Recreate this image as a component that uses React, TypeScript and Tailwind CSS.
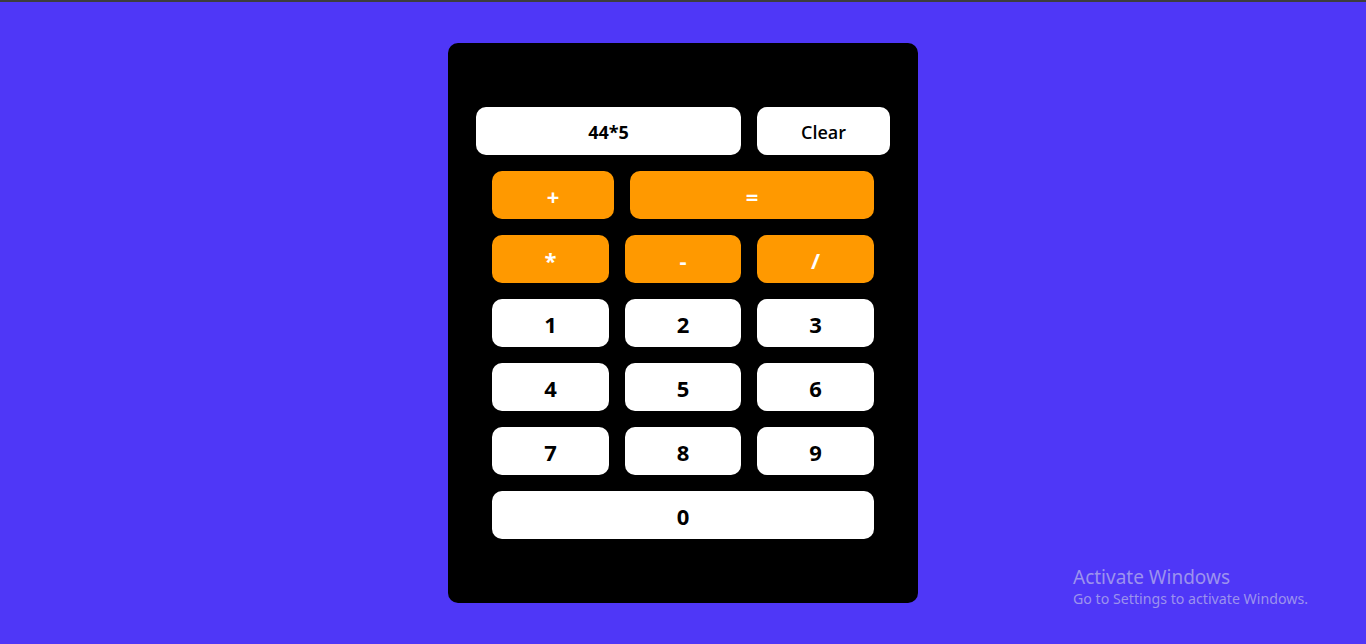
import React, { useState } from "react";

const font = { fontFamily: '"Open Sans", "Noto Sans", sans-serif' };

function Key({ label, wide, op, onPress }: { label: string; wide?: string; op?: boolean; onPress: (v: string) => void }) {
  return (
    <button
      onClick={() => onPress(label)}
      className={`${wide ?? "w-[117px]"} h-12 rounded-[10px] flex items-center justify-center pt-[3px] text-[22px] font-bold ${
        op ? "bg-[#ff9900] text-white" : "bg-white text-black"
      }`}
    >
      {label}
    </button>
  );
}

export default function App() {
  const [expr, setExpr] = useState("44*5");

  const press = (v: string) => {
    if (v === "=") {
      try {
        // eslint-disable-next-line no-new-func
        setExpr(String(Function(`return (${expr})`)()));
      } catch {
        setExpr("Error");
      }
      return;
    }
    setExpr((e) => e + v);
  };

  return (
    <div className="relative w-full h-[644px] bg-[#4f37f7] overflow-hidden" style={font}>
      <div className="h-[2px] bg-[#3d3d3d]" />
      <div className="flex justify-center pt-[41px]">
        <div className="w-[470px] h-[560px] bg-black rounded-[10px] pt-16 flex flex-col">
          <div className="flex gap-4 px-7">
            <div className="w-[265px] h-12 bg-white rounded-[10px] flex items-center justify-center pt-[2px] text-[18px] font-bold text-black">
              {expr}
            </div>
            <button
              onClick={() => setExpr("")}
              className="w-[133px] h-12 bg-white rounded-[10px] flex items-center justify-center pt-[2px] text-[18px] font-semibold text-black"
            >
              Clear
            </button>
          </div>
          <div className="flex flex-col gap-4 px-11 mt-4">
            <div className="flex gap-4">
              <Key label="+" op wide="w-[122px]" onPress={press} />
              <Key label="=" op wide="w-[244px]" onPress={press} />
            </div>
            <div className="flex gap-4">
              <Key label="*" op onPress={press} />
              <Key label="-" op wide="w-[116px]" onPress={press} />
              <Key label="/" op onPress={press} />
            </div>
            {[["1", "2", "3"], ["4", "5", "6"], ["7", "8", "9"]].map((row) => (
              <div key={row[0]} className="flex gap-4">
                <Key label={row[0]} onPress={press} />
                <Key label={row[1]} wide="w-[116px]" onPress={press} />
                <Key label={row[2]} onPress={press} />
              </div>
            ))}
            <Key label="0" wide="w-[382px]" onPress={press} />
          </div>
        </div>
      </div>

      <div className="absolute left-[1073px] top-[565px] text-[#9c92ee]" style={{ fontFamily: '"Noto Sans", "Open Sans", sans-serif' }}>
        <div className="text-[19px] leading-6">Activate Windows</div>
        <div className="text-[14.2px] leading-5">Go to Settings to activate Windows.</div>
      </div>
    </div>
  );
}
